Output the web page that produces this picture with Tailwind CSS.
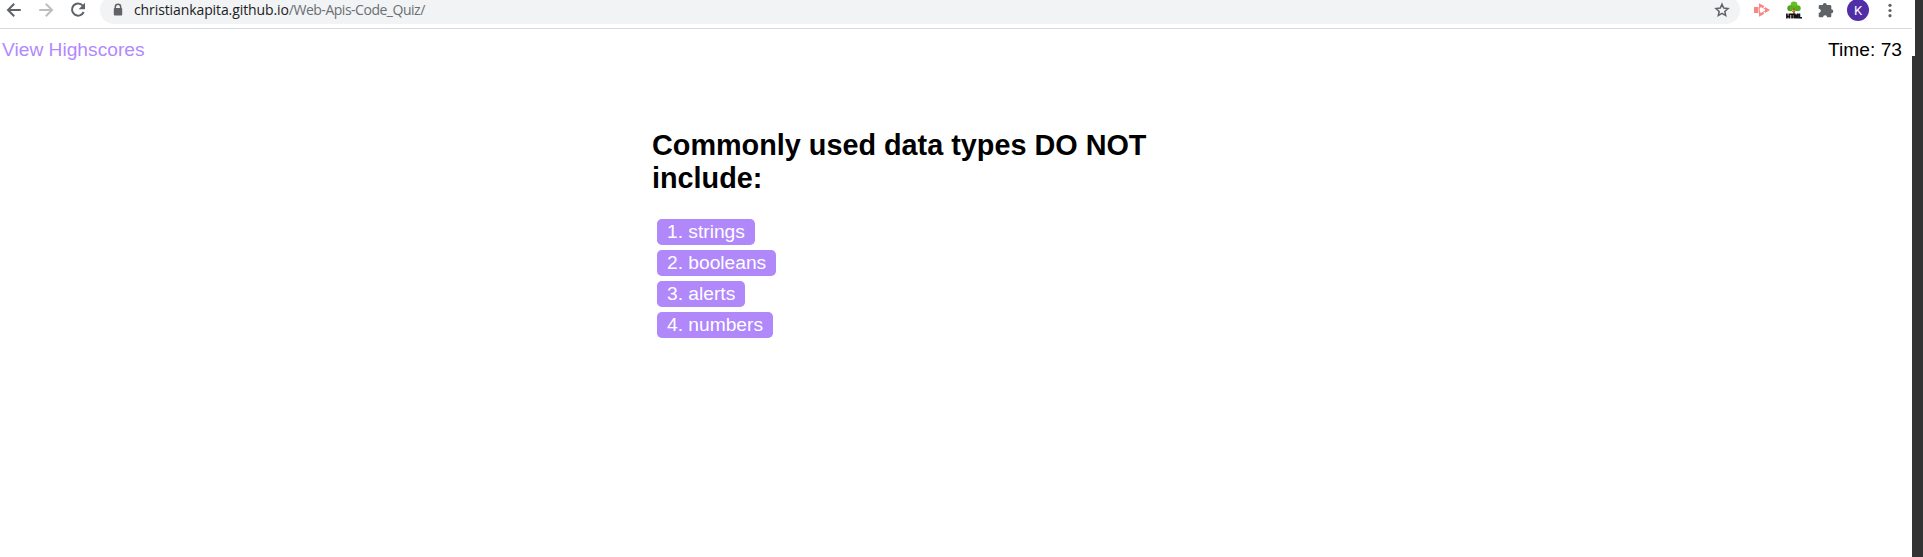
<!DOCTYPE html>
<html lang="en">
<head>
<meta charset="utf-8">
<title>Code Quiz</title>
<script src="https://cdn.jsdelivr.net/npm/@tailwindcss/browser@4"></script>
</head>
<body class="h-[557px] overflow-hidden bg-[#333333] font-['Liberation_Sans',Arial,sans-serif] text-[19.2px] leading-[22px] text-black">
<div class="flex h-14 w-[1915px] flex-col bg-white">
  <header class="flex h-[29px] w-[1912px] shrink-0 items-start border-b border-[#d5d7da]">
    <div class="flex h-6 w-full items-start overflow-hidden">
      <svg class="ml-1 h-5 w-5 shrink-0" viewBox="0 0 20 20" fill="none" stroke="#5f6368" stroke-width="2"><path d="M16.800 10H4.300M10.200 3.700 4 10l6.200 6.300"/></svg>
      <svg class="ml-3 h-5 w-5 shrink-0" viewBox="0 0 20 20" fill="none" stroke="#bcbec1" stroke-width="2"><path d="M3.200 10h12.500M9.800 3.700 16 10l-6.200 6.300"/></svg>
      <svg class="ml-3 h-5 w-5 shrink-0" viewBox="0 0 20 20"><path d="M14.800 5.600A6.100 6.100 0 1 0 15.700 12" fill="none" stroke="#5f6368" stroke-width="2"/><path d="M17 2.800v6.400h-6.400z" fill="#5f6368"/></svg>
      <div class="-mt-1 ml-3 flex h-7 w-[1640px] shrink-0 items-start rounded-full bg-[#f1f3f4] pt-1">
        <svg class="mt-[3px] ml-3 h-3.5 w-3 shrink-0" viewBox="0 0 12 14"><path d="M3.300 6V4a2.700 2.700 0 0 1 5.400 0v2" fill="none" stroke="#5f6368" stroke-width="1.500"/><rect x="1.800" y="5" width="8.400" height="7.500" rx="1" fill="#5f6368"/></svg>
        <div class="ml-2.5 h-5 w-[300px] font-['Open_Sans','Noto_Sans',sans-serif] text-[14px] leading-5 tracking-[-0.1px] whitespace-nowrap text-[#202124]"><span>christiankapita.github.io</span><span class="tracking-[-0.48px] text-[#6b6f73]">/Web-Apis-Code_Quiz/</span></div>
        <svg class="mt-[2px] mr-2.5 ml-auto h-4 w-4" viewBox="0 0 16 16" fill="none" stroke="#5f6368" stroke-width="1.500"><path d="m8 2.200 1.700 3.900 4.300.4-3.200 2.900.9 4.200L8 11.400l-3.700 2.200.9-4.200L2 6.500l4.300-.4z"/></svg>
      </div>
      <svg class="mt-[3px] ml-3.5 h-3.5 w-4 shrink-0" viewBox="0 0 16 14" fill="#fa8582"><path d="M0 4h4.300v6H0zM5 .2 10.500 3.200 9 4.500 6.500 3.500V5H5zM5 13.800l5.500-3L9 9.500l-2.500 1V9H5zM11 4l5 3-5 3z"/><path d="M5.300 4.500v5M6 3l7 4-7 4" fill="none" stroke="#fa8582"/></svg>
      <svg class="mt-px ml-4 h-[18px] w-4 shrink-0" viewBox="0 0 16 18"><circle cx="8" cy="4" r="3.400" fill="#69bd22"/><circle cx="4.300" cy="7.200" r="3" fill="#48a51d"/><circle cx="11.700" cy="7.200" r="3" fill="#55ae1e"/><path d="M4 5h8v4H4z" fill="#58b21e"/><path d="M7.200 7h1.600v6l1 4H6.200l1-4z" fill="#a96a20"/><path d="m8 12-3-3M8 11l3-2.500" stroke="#a96a20" stroke-width=".8"/><text x="0" y="16.500" font-family="Liberation Sans" font-weight="bold" font-size="5.500" textLength="16" lengthAdjust="spacingAndGlyphs" fill="#111" stroke="#111" stroke-width=".8">HTML</text></svg>
      <svg class="mt-[2px] ml-4 h-4 w-4 shrink-0" viewBox="0 0 16 16"><path d="M4.800 3a2 2 0 1 1 4 0h3.200c.7 0 1.300.6 1.300 1.300v3a2 2 0 1 1 0 4v2.600c0 .7-.6 1.300-1.300 1.300H9.100a2 2 0 0 0-4 0H1.900c-.7 0-1.200-.6-1.200-1.300v-3a2.100 2.100 0 0 0 0-4.200V4.300c0-.7.5-1.300 1.200-1.300z" fill="#5f6368"/></svg>
      <div class="-mt-px ml-[13px] flex h-[22px] w-[22px] shrink-0 items-center justify-center rounded-full bg-[#512da8] font-[Roboto,sans-serif] text-[13px] leading-none text-white">K</div>
      <svg class="mt-[3px] ml-[19px] h-4 w-1 shrink-0" viewBox="0 0 4 16" fill="#5f6368"><circle cx="2" cy="2.300" r="1.600"/><circle cx="2" cy="7.500" r="1.600"/><circle cx="2" cy="12.700" r="1.600"/></svg>
    </div>
  </header>
  <nav class="flex justify-between pt-[10px] pr-[13px] pl-[2px]">
    <a class="text-[#b388ff]">View Highscores</a>
    <span>Time: 73</span>
  </nav>
</div>
<main class="h-[501px] w-[1912px] bg-white pt-[73px] pl-[652px]">
  <h1 class="w-[600px] text-[28.8px] leading-[33px] font-bold">Commonly used data types DO NOT<br>include:</h1>
  <div class="mt-6 ml-[5px] flex flex-col items-start gap-[5px] text-white">
    <button class="h-[26px] rounded-[4.8px] bg-[#b088fa] px-2.5">1. strings</button>
    <button class="h-[26px] rounded-[4.8px] bg-[#b088fa] px-2.5">2. booleans</button>
    <button class="h-[26px] rounded-[4.8px] bg-[#b088fa] px-2.5">3. alerts</button>
    <button class="h-[26px] rounded-[4.8px] bg-[#b088fa] px-2.5">4. numbers</button>
  </div>
</main>
</body>
</html>
